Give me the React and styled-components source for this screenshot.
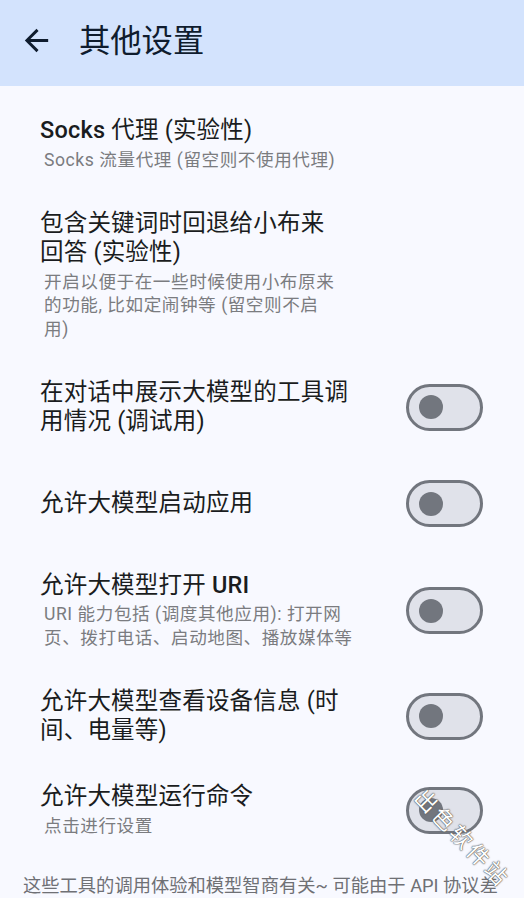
import React from "react";
import styled, { createGlobalStyle } from "styled-components";

const GlobalStyle = createGlobalStyle`
  html, body {
    margin: 0;
    padding: 0;
    background: #f8f9ff;
  }
  body {
    font-family: Roboto, "Noto Sans CJK SC", sans-serif;
    -webkit-font-smoothing: antialiased;
  }
  #root {
    height: 898px;
    overflow: hidden;
  }
`;

const Page = styled.div`
  position: relative;
  min-height: 898px;
  background: #f8f9ff;
`;

const TopBar = styled.header`
  display: flex;
  align-items: center;
  height: 86px;
  padding: 0 0 6px 18px;
  box-sizing: border-box;
  background: #d3e3fd;
`;

const BackButton = styled.button`
  display: flex;
  align-items: center;
  justify-content: center;
  width: 36px;
  height: 36px;
  padding: 0;
  border: none;
  background: none;
  color: #0f1c2e;
`;

const Title = styled.h1`
  margin: 0 0 4px 25px;
  font-size: 31.3px;
  font-weight: 400;
  color: #0f1c2e;
`;

const List = styled.div`
  padding-top: 12px;
`;

const Row = styled.div`
  position: relative;
  display: flex;
  align-items: center;
  justify-content: space-between;
  min-height: ${p => (p.$tall ? 61 : 56)}px;
  padding: 18.25px 41px 18.25px 40px;
`;

const TextBlock = styled.div`
  width: ${p => (p.$wide ? 318 : 300)}px;
  display: flex;
  flex-direction: column;
  gap: 3px;
`;

const ItemTitle = styled.div`
  font-size: 23.5px;
  line-height: 29.5px;
  letter-spacing: 0.2px;
  color: #1a1c20;
`;

const Latin = styled.span`
  font-weight: 500;
`;

const ItemSub = styled.div`
  padding-left: 4px;
  font-size: 17.6px;
  line-height: 23.5px;
  letter-spacing: 0.55px;
  color: #7b7c80;
`;

const Track = styled.div`
  flex: none;
  display: flex;
  align-items: center;
  width: 77px;
  height: 47px;
  box-sizing: border-box;
  border: 3px solid #72767e;
  border-radius: 24px;
  background: #e0e2ea;
  padding-left: 10px;
`;

const Thumb = styled.div`
  width: 24px;
  height: 24px;
  border-radius: 50%;
  background: #72767e;
`;

const Footer = styled.p`
  margin: 17px 0 0;
  padding: 0 20px 0 23px;
  font-size: 18.3px;
  line-height: 24px;
  color: #6f7075;
  white-space: nowrap;
`;

const Watermark = styled.span`
  position: absolute;
  z-index: 2;
  left: 418px;
  top: 14px;
  font-size: 22px;
  line-height: 32px;
  letter-spacing: 3px;
  color: #ffffff;
  white-space: nowrap;
  transform: rotate(46deg);
  transform-origin: left center;
  text-shadow: 0 0 1px #555, 0 0 1px #555, 0 0 2px #777;
  pointer-events: none;
`;

const BackIcon = () => (
  <svg width="35" height="35" viewBox="0 0 24 24" fill="currentColor">
    <path d="M20 11H7.83l5.59-5.59L12 4l-8 8 8 8 1.41-1.41L7.83 13H20v-2z" />
  </svg>
);

const Switch = () => (
  <Track>
    <Thumb />
  </Track>
);

const Item = ({ title, sub, toggle, tall, children }) => (
  <Row $tall={tall}>
    <TextBlock $wide={toggle}>
      <ItemTitle>{title}</ItemTitle>
      {sub && <ItemSub>{sub}</ItemSub>}
    </TextBlock>
    {toggle && <Switch />}
    {children}
  </Row>
);

const App = () => (
  <Page>
    <GlobalStyle />
    <TopBar>
      <BackButton aria-label="back">
        <BackIcon />
      </BackButton>
      <Title>其他设置</Title>
    </TopBar>
    <List>
      <Item
        title={<><Latin>Socks</Latin> 代理 (实验性)</>}
        sub="Socks 流量代理 (留空则不使用代理)"
      />
      <Item
        title="包含关键词时回退给小布来回答 (实验性)"
        sub="开启以便于在一些时候使用小布原来的功能, 比如定闹钟等 (留空则不启用)"
      />
      <Item title="在对话中展示大模型的工具调用情况 (调试用)" toggle />
      <Item title="允许大模型启动应用" toggle tall />
      <Item
        title={<>允许大模型打开 <Latin>URI</Latin></>}
        sub="URI 能力包括 (调度其他应用): 打开网页、拨打电话、启动地图、播放媒体等"
        toggle
      />
      <Item title="允许大模型查看设备信息 (时间、电量等)" toggle />
      <Item title="允许大模型运行命令" sub="点击进行设置" toggle>
        <Watermark>出色软件站</Watermark>
      </Item>
    </List>
    <Footer>这些工具的调用体验和模型智商有关~ 可能由于 API 协议差</Footer>
  </Page>
);

export default App;
